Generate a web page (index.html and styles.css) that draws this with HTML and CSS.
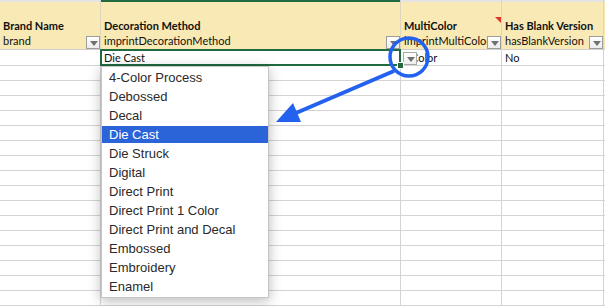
FILE: index.html
```html
<!DOCTYPE html>
<html>
<head>
  <title>Decoration Method</title>
  <link rel="stylesheet" href="styles.css">
</head>
<body>
  <div class="sheet">
    <div class="row strip">
      <div class="cell"></div><div class="cell sel"></div><div class="cell"></div><div class="cell"></div><div class="cell"></div>
    </div>
    <div class="row hdr h1">
      <div class="cell"></div><div class="cell"></div><div class="cell"></div><div class="cell"></div><div class="cell"></div>
    </div>
    <div class="row hdr h2">
      <div class="cell">Brand Name</div>
      <div class="cell">Decoration Method</div>
      <div class="cell note">MultiColor</div>
      <div class="cell">Has Blank Version</div>
      <div class="cell"></div>
    </div>
    <div class="row hdr h3">
      <div class="cell"><span class="field">brand</span><span class="filter"></span></div>
      <div class="cell"><span class="field">imprintDecorationMethod</span><span class="filter"></span></div>
      <div class="cell"><span class="field">imprintMultiColor</span><span class="filter"></span></div>
      <div class="cell"><span class="field">hasBlankVersion</span><span class="filter"></span></div>
      <div class="cell"></div>
    </div>
    <div class="row data first">
      <div class="cell"></div>
      <div class="cell active">Die Cast<span class="pick"></span><span class="handle"></span></div>
      <div class="cell indent">Color</div>
      <div class="cell">No</div>
      <div class="cell"></div>
    </div>
    <div class="row data"><div class="cell"></div><div class="cell"></div><div class="cell"></div><div class="cell"></div><div class="cell"></div></div>
    <div class="row data"><div class="cell"></div><div class="cell"></div><div class="cell"></div><div class="cell"></div><div class="cell"></div></div>
    <div class="row data"><div class="cell"></div><div class="cell"></div><div class="cell"></div><div class="cell"></div><div class="cell"></div></div>
    <div class="row data"><div class="cell"></div><div class="cell"></div><div class="cell"></div><div class="cell"></div><div class="cell"></div></div>
    <div class="row data"><div class="cell"></div><div class="cell"></div><div class="cell"></div><div class="cell"></div><div class="cell"></div></div>
    <div class="row data"><div class="cell"></div><div class="cell"></div><div class="cell"></div><div class="cell"></div><div class="cell"></div></div>
    <div class="row data"><div class="cell"></div><div class="cell"></div><div class="cell"></div><div class="cell"></div><div class="cell"></div></div>
    <div class="row data"><div class="cell"></div><div class="cell"></div><div class="cell"></div><div class="cell"></div><div class="cell"></div></div>
    <div class="row data"><div class="cell"></div><div class="cell"></div><div class="cell"></div><div class="cell"></div><div class="cell"></div></div>
    <div class="row data"><div class="cell"></div><div class="cell"></div><div class="cell"></div><div class="cell"></div><div class="cell"></div></div>
    <div class="row data"><div class="cell"></div><div class="cell"></div><div class="cell"></div><div class="cell"></div><div class="cell"></div></div>
    <div class="row data"><div class="cell"></div><div class="cell"></div><div class="cell"></div><div class="cell"></div><div class="cell"></div></div>
    <div class="row data"><div class="cell"></div><div class="cell"></div><div class="cell"></div><div class="cell"></div><div class="cell"></div></div>
    <div class="row data"><div class="cell"></div><div class="cell"></div><div class="cell"></div><div class="cell"></div><div class="cell"></div></div>
    <div class="row data"><div class="cell"></div><div class="cell"></div><div class="cell"></div><div class="cell"></div><div class="cell"></div></div>
    <div class="row data"><div class="cell"></div><div class="cell"></div><div class="cell"></div><div class="cell"></div><div class="cell"></div></div>

    <ul class="menu">
      <li>4-Color Process</li>
      <li>Debossed</li>
      <li>Decal</li>
      <li class="current">Die Cast</li>
      <li>Die Struck</li>
      <li>Digital</li>
      <li>Direct Print</li>
      <li>Direct Print 1 Color</li>
      <li>Direct Print and Decal</li>
      <li>Embossed</li>
      <li>Embroidery</li>
      <li>Enamel</li>
    </ul>

    <svg class="callout" width="605" height="306" viewBox="0 0 605 306">
      <circle cx="409" cy="57" r="19" fill="none" stroke="#2262ee" stroke-width="3.5"/>
      <line x1="394" y1="71" x2="296" y2="113" stroke="#2262ee" stroke-width="4"/>
      <polygon points="276,122 293,103 301,122" fill="#2262ee"/>
    </svg>
  </div>
</body>
</html>
```

FILE: styles.css
```css
body {
  margin: 0;
  background: #fff;
  overflow: hidden;
}

.sheet {
  position: relative;
  width: 605px;
  height: 306px;
  font-family: "Lato", "Liberation Sans", sans-serif;
  font-size: 11px;
  color: #111;
}

.row {
  display: grid;
  grid-template-columns: 101px 300px 101px 102px 1fr;
  box-sizing: border-box;
}

.cell {
  box-sizing: border-box;
  border-right: 1px solid #d4d4d4;
  padding-left: 3px;
  white-space: nowrap;
  overflow: hidden;
}

/* column letter strip above the headers */
.strip {
  height: 2px;
  background: #e4e4e4;
}

.strip .sel {
  background: #1f6b3f;
}

.hdr {
  background: #f9e9b4;
}

.hdr .cell {
  border-right-color: #ddd6bd;
}

.h1 {
  height: 15px;
}

.h2 {
  height: 16px;
}

.h2 .cell {
  font-weight: bold;
  line-height: 17px;
}

.h3 {
  height: 17px;
  border-bottom: 1px solid #cfcfcf;
}

.h3 .cell {
  display: flex;
  align-items: flex-end;
}

.field {
  flex: 1;
  overflow: hidden;
  line-height: 16px;
}

.filter {
  flex: none;
  position: relative;
  width: 14px;
  height: 13px;
  box-sizing: border-box;
  border: 1px solid #9d9d9d;
  background: linear-gradient(#fff, #ececec);
}

.filter::after,
.pick::after {
  content: "";
  position: absolute;
  left: 3px;
  top: 4px;
  border-left: 4px solid transparent;
  border-right: 4px solid transparent;
  border-top: 5px solid #707070;
}

.note {
  position: relative;
}

.note::after {
  content: "";
  position: absolute;
  top: 0;
  right: 0;
  border-top: 6px solid #e4322b;
  border-left: 6px solid transparent;
}

.data {
  height: 15px;
  border-bottom: 1px solid #d4d4d4;
}

.data .cell {
  line-height: 15px;
}

.data.first {
  height: 16px;
}

.indent {
  padding-left: 10px;
}

.active {
  position: relative;
  overflow: visible;
}

.active::before {
  content: "";
  position: absolute;
  top: -1px;
  left: -1px;
  right: -1px;
  bottom: -1px;
  border: 2px solid #1f6b3f;
}

.pick {
  position: absolute;
  left: calc(100% + 3px);
  top: 2px;
  width: 14px;
  height: 13px;
  box-sizing: border-box;
  border: 1px solid #a8a8a8;
  background: linear-gradient(#fff, #ededed);
  z-index: 2;
}

.handle {
  position: absolute;
  right: -4px;
  bottom: -4px;
  width: 5px;
  height: 5px;
  background: #1f6b3f;
  border: 1px solid #fff;
  z-index: 2;
}

.menu {
  position: absolute;
  left: 101px;
  top: 66px;
  width: 168px;
  margin: 0;
  padding: 2px 0 0;
  list-style: none;
  box-sizing: border-box;
  background: #fff;
  border: 1px solid #c6c6c6;
  box-shadow: 0 3px 12px rgba(0, 0, 0, 0.28);
  font-family: "Liberation Sans", Arial, sans-serif;
  font-size: 13px;
  color: #2a2a2a;
  z-index: 3;
}

.menu li {
  height: 17px;
  line-height: 17px;
  margin: 0 0 2px;
  padding-left: 7px;
}

.menu .current {
  background: #2b63d8;
  color: #fff;
}

.callout {
  position: absolute;
  left: 0;
  top: 0;
  pointer-events: none;
  z-index: 4;
}
```
